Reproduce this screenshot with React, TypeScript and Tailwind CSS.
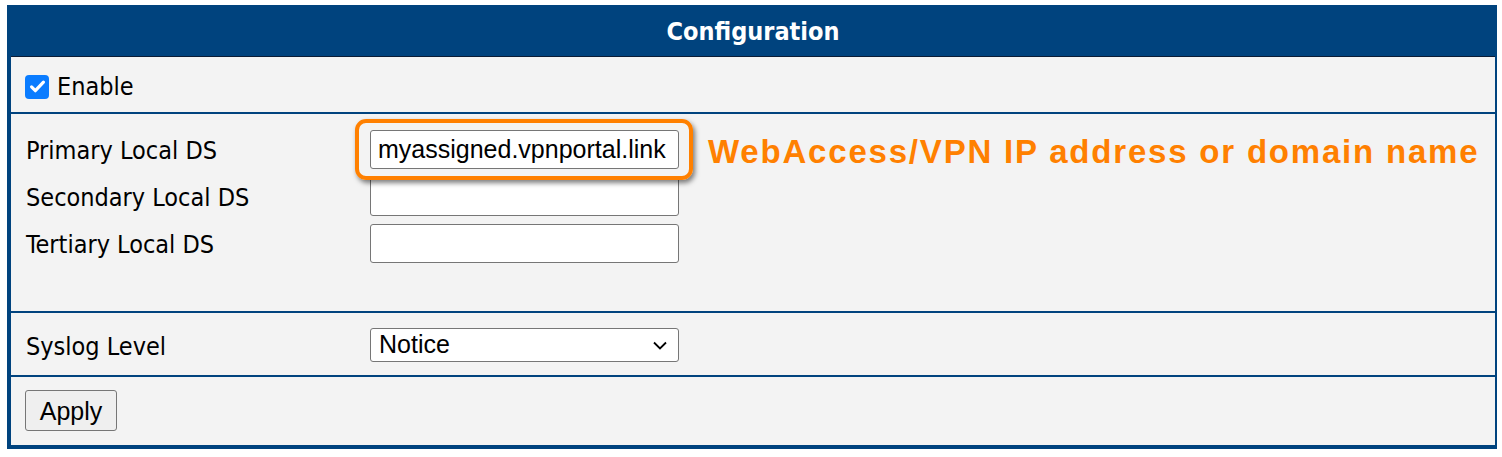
const labelFont = "font-['DejaVu_Sans_Condensed','DejaVu_Sans',sans-serif] [font-stretch:condensed]";
const fieldFont = "font-['Liberation_Sans',Arial,sans-serif]";

const TextField = ({ value }: { value?: string }) => (
  <input
    type="text"
    readOnly
    defaultValue={value}
    className={`${fieldFont} h-[39px] w-[309px] rounded-[3px] border border-[#767676] bg-white px-[7px] text-[25px] text-black outline-none`}
  />
);

const Row = ({ label, children }: { label: string; children: React.ReactNode }) => (
  <div className="flex h-[39px] items-center">
    <div className={`${labelFont} w-[344px] pt-[2px] text-[25px] leading-none text-black`}>{label}</div>
    {children}
  </div>
);

export default function App() {
  return (
    <div className="min-h-screen bg-white pl-[7px] pt-[5px]">
      <div className="w-[1490px] border-b-4 border-l-4 border-r-2 border-[#00437e] bg-[#f3f3f3]">
        {/* header */}
        <div className="flex h-[52px] items-center justify-center border-b border-[#0a1c36] bg-[#00437e] pt-[3px]">
          <h2 className={`${labelFont} text-[25px] font-bold text-white`}>Configuration</h2>
        </div>

        {/* enable */}
        <div className="flex h-[57px] items-center border-b-2 border-[#00437e] pl-[14px] pt-[4px]">
          <span className="flex h-6 w-6 items-center justify-center rounded-[4px] bg-[#0a7cff]">
            <svg viewBox="0 0 24 24" className="h-[19px] w-[19px]" fill="none" stroke="white" strokeWidth="4" strokeLinecap="round" strokeLinejoin="round">
              <path d="M4.5 12.5l4.8 4.8L19.5 6.5" />
            </svg>
          </span>
          <span className={`${labelFont} ml-[8px] text-[25px] text-black`}>Enable</span>
        </div>

        {/* local DS */}
        <div className="flex h-[199px] flex-col gap-[8px] border-b-2 border-[#00437e] pl-[15px] pt-[16px]">
          <Row label="Primary Local DS">
            <div className="relative">
              <TextField value="myassigned.vpnportal.link" />
              <div className="pointer-events-none absolute left-[-15px] top-[-11px] h-[61px] w-[338px] rounded-[11px] border-[4px] border-[#ff8000] shadow-[2px_3px_5px_rgba(0,0,0,0.5)]" />
            </div>
            <span className="ml-[29px] pt-[4px] font-['Liberation_Sans',Arial,sans-serif] text-[33px] font-bold leading-none tracking-[1.8px] text-[#ff8000]">
              WebAccess/VPN IP address or domain name
            </span>
          </Row>
          <Row label="Secondary Local DS">
            <TextField />
          </Row>
          <Row label="Tertiary Local DS">
            <TextField />
          </Row>
        </div>

        {/* syslog */}
        <div className="flex h-[64px] items-center border-b-2 border-[#00437e] pl-[15px] pt-[2px]">
          <Row label="Syslog Level">
            <div className={`${fieldFont} flex h-[34px] w-[309px] items-center justify-between rounded-[3px] border border-[#767676] bg-white pl-[8px] pr-[11px] text-[25px] text-black`}>
              <span>Notice</span>
              <svg viewBox="0 0 14 9" className="h-[9px] w-[14px]" fill="none" stroke="black" strokeWidth="1.8">
                <path d="M1 1.5l6 6 6-6" />
              </svg>
            </div>
          </Row>
        </div>

        {/* apply */}
        <div className="h-[68px] pl-[14px] pt-[13px]">
          <button className={`${fieldFont} h-[41px] w-[92px] rounded-[3px] border border-[#767676] bg-[#efefef] pt-[2px] text-[25px] text-black`}>
            Apply
          </button>
        </div>
      </div>
    </div>
  );
}
